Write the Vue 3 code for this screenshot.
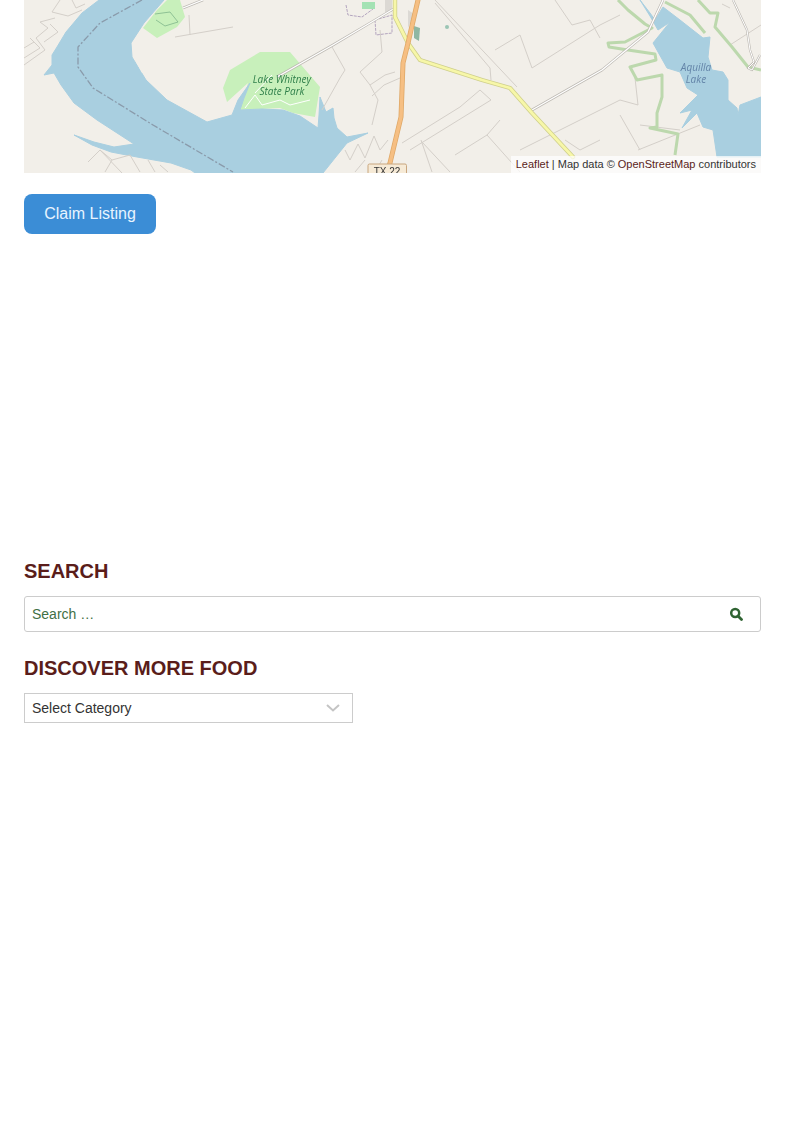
<template>
  <main class="page">
    <section class="map">
      <svg class="map-canvas" viewBox="24 0 737 173" width="737" height="173">
        <rect x="24" y="0" width="737" height="173" fill="#f2efe9" />

        <!-- parks -->
        <g fill="#c8f0bb">
          <path d="M143,28 L157,10 L167,0 L180,0 L185,17 L177,27 L157,38 Z" />
          <path d="M223,88 L230,70 L260,52 L290,52 L320,87 L315,117 L293,113 L280,108 L240,110 L248,83 L227,102 Z" />
        </g>

        <!-- water -->
        <g fill="#a9cfe0" stroke="#a9cfe0" stroke-width="1" stroke-linejoin="round">
          <path d="M99,0 L82,13 L66,32 L57,47 L52,55 L52,65 L44,75 L54,73 L61,85 L74,103 L97,120 L134,144 L114,147 L94,142 L74,135 L92,145 L111,152 L137,157 L171,163 L191,170 L195,173 L323,173 L335,158 L347,143 L368,133 L347,137 L337,128 L334,118 L333,108 L326,112 L320,97 L319,115 L318,128 L300,116 L283,110 L262,109 L240,110 L244,98 L250,83 L238,100 L232,115 L207,122 L167,100 L146,80 L132,57 L131,43 L144,23 L164,0 Z" />
          <path d="M640,0 L650,13 L655,20 L663,7 L680,20 L703,38 L710,37 L708,57 L712,70 L723,72 L728,80 L728,100 L737,108 L738,115 L740,105 L761,97 L761,157 L717,157 L713,130 L703,127 L697,113 L682,128 L692,110 L680,113 L698,95 L687,88 L680,72 L667,68 L653,43 L670,22 L658,30 L650,16 Z" />
        </g>
        <path d="M138,52 L146,66 L142,73 L136,62 Z" fill="#f2efe9" />

        <!-- county and minor roads -->
        <g fill="none" stroke="#d4cfc9" stroke-width="1">
          <path d="M24,65 L45,50 L36,38 L48,28 L40,22 L55,18 M24,58 L40,48 L30,38 M24,48 L34,42 M44,42 L58,32 L50,24 M60,0 L52,12 L68,16 L82,10 M72,0 L76,8 L85,4" />
          <path d="M88,162 L100,150 L112,160 L105,172 M100,150 L122,173 M112,160 L130,155 L140,172 M148,160 L155,172 M160,165 L168,172" />
          <path d="M175,37 L233,27 M189,15 L190,35" />
          <path d="M380,30 L382,52 L360,72 L370,85 L385,75 L395,72 M372,96 L384,85 L400,78 M370,85 L378,100 L372,125" />
          <path d="M332,47 L345,70 L340,78 L322,110 M345,150 L350,160 L358,144 L365,158 L374,136 L380,150 L388,140 M355,172 L365,160 M375,172 L382,160" />
          <path d="M402,143 L460,107 L480,90 L491,100 L410,150" />
          <path d="M435,0 L517,87 M435,3 L490,68 L491,80" />
          <path d="M495,50 L520,35 L532,68 L600,25 L620,15" />
          <path d="M555,0 L572,25 L590,20 L600,38" />
          <path d="M421,140 L432,172 M422,142 L450,172 M500,120 L487,135 L520,172 M487,135 L455,155" />
          <path d="M520,150 L620,100 L638,105 L635,78 M620,115 L640,150 M600,140 L580,150 L565,140" />
          <path d="M640,125 L680,130 M638,150 L700,125" />
          <path d="M730,45 L761,25 M722,4 L730,8" />
        </g>

        <!-- small settlements -->
        <g fill="none" stroke="#b4a5bf" stroke-width="1" stroke-dasharray="3 1">
          <path d="M346,5 L348,15 L362,17 L373,9 M375,20 L392,15 L392,33 L376,35 Z" />
        </g>
        <rect x="362" y="2" width="13" height="7" fill="#a4e2b4" />
        <path d="M385,0 L392,0 L392,12 L385,12 Z M408,10 L414,14 L408,28 Z" fill="#dcd9d4" />
        <path d="M414,26 L420,28 L419,41 L414,38 Z" fill="#8fb7a3" />
        <circle cx="447" cy="27" r="2" fill="#9bc5b4" />

        <!-- lake protected area border -->
        <g fill="none" stroke="#bcd8ad" stroke-width="3" stroke-linejoin="round">
          <path d="M618,0 L628,10 L645,24 L652,28 L625,42 L608,43 L609,47 L628,50 L655,54 L656,60 L630,67 L637,80 L662,75 L662,97 L657,113 L657,127 L650,128 L678,134 L675,155" />
          <path d="M665,2 L690,15 L705,33" />
          <path d="M698,0 L710,13 L718,13 L715,27 L732,47 L748,67 L761,70" />
        </g>

        <!-- dashed line down the lake -->
        <path d="M142,0 L100,23 L78,47 L78,67 L93,88 L153,125 L233,172" fill="none" stroke="#8a9bab" stroke-width="1.300" stroke-dasharray="7 2 2 2" />

        <!-- white roads -->
        <g fill="none" stroke-linejoin="round">
          <path d="M277,77 L333,45 L370,23 L395,8 M183,8 L203,0 M532,110 L602,70 L648,32 L663,0" stroke="#bdb9b3" stroke-width="2.600" />
          <path d="M277,77 L333,45 L370,23 L395,8 M183,8 L203,0 M532,110 L602,70 L648,32 L663,0" stroke="#fff" stroke-width="1.300" />
          <path d="M733,0 L747,30 L750,50 L754,62 L748,68 L752,70 L760,55" stroke="#bdb9b3" stroke-width="2.200" />
          <path d="M733,0 L747,30 L750,50 L754,62 L748,68 L752,70 L760,55" stroke="#fff" stroke-width="1" />
        </g>

        <!-- park tracks -->
        <g fill="none" stroke="#fff" stroke-width="1">
          <path d="M245,108 L255,95 L262,105 L280,100 L290,105 L310,100 M255,93 L272,75" />
        </g>
        <path d="M155,14 L170,12 L178,22 L165,26 L156,20" fill="none" stroke="#7fb58a" stroke-width="0.800" />

        <!-- main roads -->
        <g fill="none" stroke-linejoin="round" stroke-linecap="round">
          <path d="M395,0 L395,17 L408,43 L420,60 L482,80 L510,88 L532,113 L573,157" stroke="#cfcf8c" stroke-width="4.400" />
          <path d="M395,0 L395,17 L408,43 L420,60 L482,80 L510,88 L532,113 L573,157" stroke="#f7f7a8" stroke-width="2.800" />
          <path d="M418,0 L408,43 L403,63 L401,117 L390,163 L387,172" stroke="#dfa867" stroke-width="5" />
          <path d="M418,0 L408,43 L403,63 L401,117 L390,163 L387,172" stroke="#f6bf83" stroke-width="3.400" />
        </g>

        <!-- labels -->
        <g class="park-label">
          <text x="282" y="83">Lake Whitney</text>
          <text x="282" y="95">State Park</text>
        </g>
        <g class="lake-label">
          <text x="696" y="71">Aquilla</text>
          <text x="696" y="83">Lake</text>
        </g>
        <rect x="368" y="164" width="38.500" height="12" rx="1.500" fill="#f6ead6" stroke="#c9a67e" />
        <text class="shield" x="387" y="175">TX 22</text>
      </svg>
      <div class="attribution">
        <a href="#">Leaflet</a> | Map data © <a href="#">OpenStreetMap</a> contributors
      </div>
    </section>

    <button class="claim" type="button">Claim Listing</button>

    <aside class="sidebar">
      <h2>Search</h2>
      <form class="search" @submit.prevent>
        <input type="search" placeholder="Search …" />
        <button type="submit" aria-label="Search">
          <svg viewBox="0 0 14 14" width="14" height="14">
            <circle cx="6.200" cy="6" r="4" fill="none" stroke="#2f6332" stroke-width="2.500" />
            <path d="M9,9 L12.500,12.500" stroke="#2f6332" stroke-width="2.800" stroke-linecap="round" />
          </svg>
        </button>
      </form>

      <h2>Discover more food</h2>
      <div class="category">
        <select>
          <option>Select Category</option>
        </select>
        <svg viewBox="0 0 14 8" width="14" height="8">
          <path d="M1,1 L7,6.500 L13,1" fill="none" stroke="#c4c4c4" stroke-width="2" />
        </svg>
      </div>
    </aside>
  </main>
</template>

<script setup>
</script>

<style>
body {
  background: #fff;
}
</style>

<style scoped>
.page {
  padding: 0 24px;
  font-family: "Liberation Sans", Arial, sans-serif;
}

.map {
  position: relative;
  height: 173px;
  overflow: hidden;
}
.map-canvas {
  display: block;
  filter: blur(0.4px);
}
.park-label text {
  font: italic 10px "Open Sans", sans-serif;
  fill: #2f7f4a;
  text-anchor: middle;
}
.lake-label text {
  font: italic 10px "Open Sans", sans-serif;
  fill: #6384a8;
  text-anchor: middle;
}
.shield {
  font: 10px "Liberation Sans", sans-serif;
  fill: #333;
  text-anchor: middle;
}
.attribution {
  position: absolute;
  right: 0;
  bottom: 0;
  padding: 0 5px;
  background: rgba(255, 255, 255, 0.7);
  font-size: 11px;
  line-height: 17px;
  color: #333;
}
.attribution a {
  color: #5a1d1a;
  text-decoration: none;
}

.claim {
  display: block;
  margin-top: 21px;
  width: 132px;
  height: 40px;
  border: 0;
  border-radius: 8px;
  background: #3b8dd6;
  color: #e8f4ff;
  font-family: inherit;
  font-size: 16px;
}

.sidebar {
  margin-top: 325px;
}
.sidebar h2 {
  margin: 0 0 13px;
  font-size: 20px;
  line-height: 24px;
  font-weight: 700;
  text-transform: uppercase;
  color: #5a1d1a;
}

.search {
  position: relative;
  height: 36px;
  margin-bottom: 24px;
}
.search input {
  box-sizing: border-box;
  width: 100%;
  height: 36px;
  padding: 0 7px;
  border: 1px solid #ccc;
  border-radius: 3px;
  font-family: inherit;
  font-size: 14px;
  color: #333;
  outline: none;
}
.search input::placeholder {
  color: #3f6f45;
  opacity: 1;
}
.search button {
  position: absolute;
  top: 11px;
  right: 18px;
  padding: 0;
  border: 0;
  background: none;
  line-height: 0;
}

.category {
  position: relative;
  width: 329px;
}
.category select {
  display: block;
  box-sizing: border-box;
  width: 100%;
  height: 30px;
  padding: 0 7px;
  border: 1px solid #ccc;
  border-radius: 0;
  background: #fff;
  appearance: none;
  font-family: inherit;
  font-size: 14px;
  color: #333;
}
.category svg {
  position: absolute;
  top: 11px;
  right: 13px;
}
</style>
